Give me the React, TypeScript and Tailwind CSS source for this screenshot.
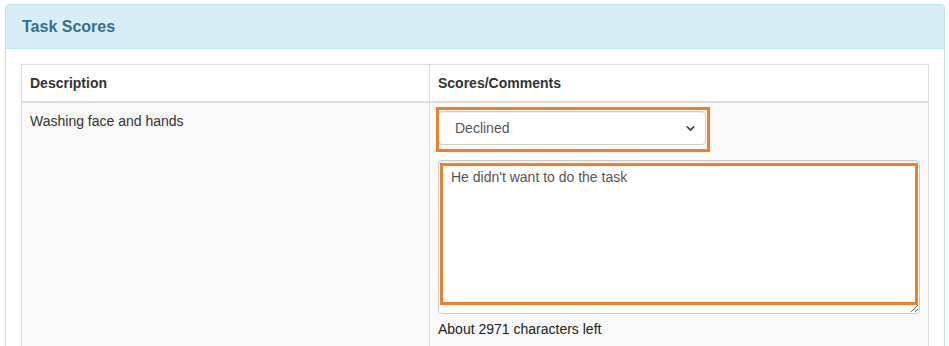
import { ChevronDown } from "lucide-react";

function App() {
  return (
    <div className="min-h-screen bg-white pt-[4px] pl-[5px] pr-[4px] font-['Liberation_Sans',Arial,sans-serif] text-[14px] leading-[20px] text-[#333]">
      <div className="rounded-[4px] border border-[#bce8f1] bg-white">
        {/* panel heading */}
        <div className="rounded-t-[3px] border-b border-[#bce8f1] bg-[#d9edf7] px-[16px] py-[10px] text-[16px] font-bold leading-[23px] text-[#31708f]">
          Task Scores
        </div>

        <div className="p-[15px]">
          <div className="border border-[#ddd]">
            {/* header */}
            <div className="grid grid-cols-[407px_1fr] border-b-2 border-[#ddd] font-bold">
              <div className="p-[8px]">Description</div>
              <div className="border-l border-[#ddd] p-[8px]">Scores/Comments</div>
            </div>

            {/* row */}
            <div className="grid grid-cols-[407px_1fr] bg-[#f9f9f9]">
              <div className="p-[8px]">Washing face and hands</div>
              <div className="border-l border-[#ddd] p-[8px]">
                <div className="relative w-[268px]">
                  <select
                    defaultValue="declined"
                    className="h-[34px] w-full appearance-none rounded-[4px] border border-[#ccc] bg-white pl-[16px] pr-[30px] text-[14px] text-[#555] shadow-[inset_0_1px_1px_rgba(0,0,0,0.075)] outline-none"
                  >
                    <option value="completed">Completed</option>
                    <option value="declined">Declined</option>
                  </select>
                  <ChevronDown
                    size={13}
                    strokeWidth={3.2}
                    className="pointer-events-none absolute right-[9px] top-[11px] text-[#444]"
                  />
                  {/* highlight */}
                  <div className="pointer-events-none absolute top-[-4px] left-[-2px] right-[-4px] bottom-[-7px] border-[3px] border-[#ee7f2d]" />
                </div>

                <div className="relative mt-[15px]">
                  <textarea
                    defaultValue="He didn't want to do the task"
                    className="block h-[154px] w-full rounded-[4px] border border-[#ccc] bg-white px-[12px] py-[6px] text-[14px] leading-[20px] text-[#555] shadow-[inset_0_1px_1px_rgba(0,0,0,0.075)] outline-none"
                  />
                  <div className="pointer-events-none absolute top-[3px] left-[2px] right-[2px] bottom-[9px] border-[3px] border-[#ee7f2d]" />
                </div>

                <div className="mt-[5px] text-[#222]">About 2971 characters left</div>
              </div>
            </div>
          </div>
        </div>
      </div>
    </div>
  );
}

export default App;
